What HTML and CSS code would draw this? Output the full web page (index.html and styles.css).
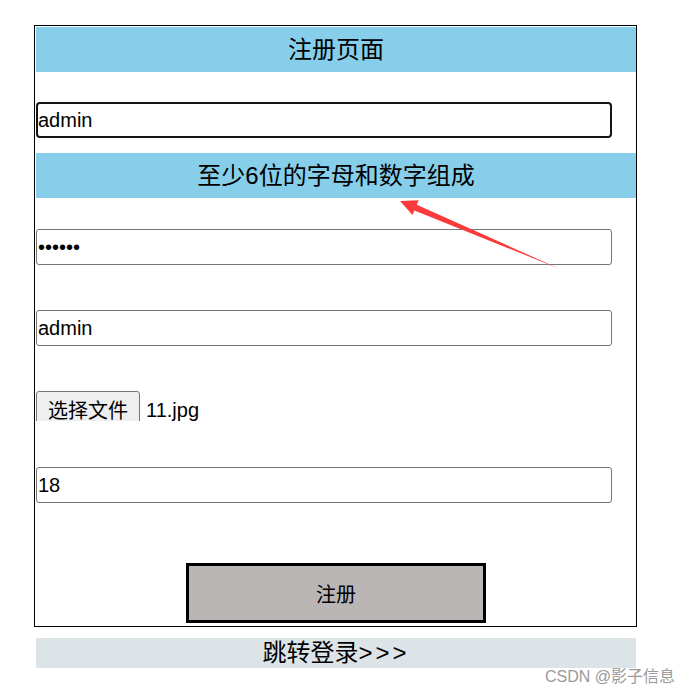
FILE: index.html
```html
<!DOCTYPE html>
<html lang="zh-CN">
<head>
<meta charset="utf-8">
<title>注册页面</title>
<link rel="stylesheet" href="styles.css">
</head>
<body>
<div class="page">
  <form class="box">
    <div class="band">注册页面</div>
    <input class="field focus" type="text" value="admin">
    <div class="band hint">至少6位的字母和数字组成</div>
    <input class="field" type="password" value="123456">
    <input class="field" type="text" value="admin">
    <div class="file"><span class="file-btn">选择文件</span><span class="file-name">11.jpg</span></div>
    <input class="field" type="text" value="18">
    <button class="submit" type="button">注册</button>
  </form>
  <div class="login">跳转登录<span class="gt">&gt;&gt;&gt;</span></div>
</div>
<svg class="arrow" width="697" height="695" viewBox="0 0 697 695">
  <polygon points="400,201 418.7,200.2 416.8,204.8 560,269 414.4,210.4 412.5,215" fill="#fb3b3b"/>
</svg>
<div class="watermark">CSDN @影子信息</div>
</body>
</html>
```
FILE: styles.css
```css
html, body {
  margin: 0;
  padding: 0;
  background: #ffffff;
}
body {
  font-family: "Liberation Sans", "Noto Sans CJK SC", sans-serif;
  color: #000;
  width: 697px;
  height: 695px;
  position: relative;
  overflow: hidden;
}
.page {
  padding-top: 25px;
}
.box {
  box-sizing: border-box;
  width: 603px;
  margin: 0 0 0 34px;
  padding: 1px 0 3px 1px;
  border: 1px solid #000;
  display: flex;
  flex-direction: column;
  align-items: flex-start;
}
.band {
  width: 600px;
  height: 45px;
  line-height: 45px;
  background: #87ceeb;
  text-align: center;
  font-size: 24px;
}
.hint {
  margin-top: 15px;
}
.field {
  box-sizing: border-box;
  width: 576px;
  height: 36px;
  margin: 0;
  padding: 0 0 0 1px;
  border: 1px solid #767676;
  border-radius: 3px;
  font-family: "Liberation Sans", "Noto Sans CJK SC", sans-serif;
  font-size: 20px;
  color: #000;
  background: #fff;
  outline: none;
}
.focus {
  margin-top: 30px;
  border: 2px solid #141414;
  border-radius: 4px;
  padding-left: 0;
}
.hint + .field {
  margin-top: 31px;
}
.hint + .field + .field {
  margin-top: 45px;
}
.file {
  margin-top: 45px;
  height: 30px;
  overflow: hidden;
  display: flex;
  align-items: flex-start;
  font-size: 20px;
}
.file-btn {
  box-sizing: border-box;
  width: 104px;
  height: 38px;
  padding-top: 9px;
  line-height: 20px;
  text-align: center;
  background: #efefef;
  border: 1px solid #767676;
  border-radius: 3px;
}
.file-name {
  margin-left: 6px;
  padding-top: 9px;
  line-height: 20px;
}
.file + .field {
  margin-top: 46px;
}
.submit {
  align-self: center;
  box-sizing: border-box;
  width: 300px;
  height: 60px;
  margin-top: 60px;
  border: 3px solid #000;
  background: #bab6b5;
  font-family: "Liberation Sans", "Noto Sans CJK SC", sans-serif;
  font-size: 20px;
  color: #000;
  padding: 0;
}
.login {
  width: 600px;
  height: 30px;
  margin: 11px 0 0 36px;
  line-height: 30px;
  background: #dde4e8;
  text-align: center;
  font-size: 24px;
}
.gt {
  letter-spacing: 3px;
}
.arrow {
  position: absolute;
  left: 0;
  top: 0;
  pointer-events: none;
}
.watermark {
  position: absolute;
  left: 545px;
  top: 666px;
  font-size: 16px;
  line-height: 22px;
  color: #9a9a9a;
  white-space: nowrap;
}
```
